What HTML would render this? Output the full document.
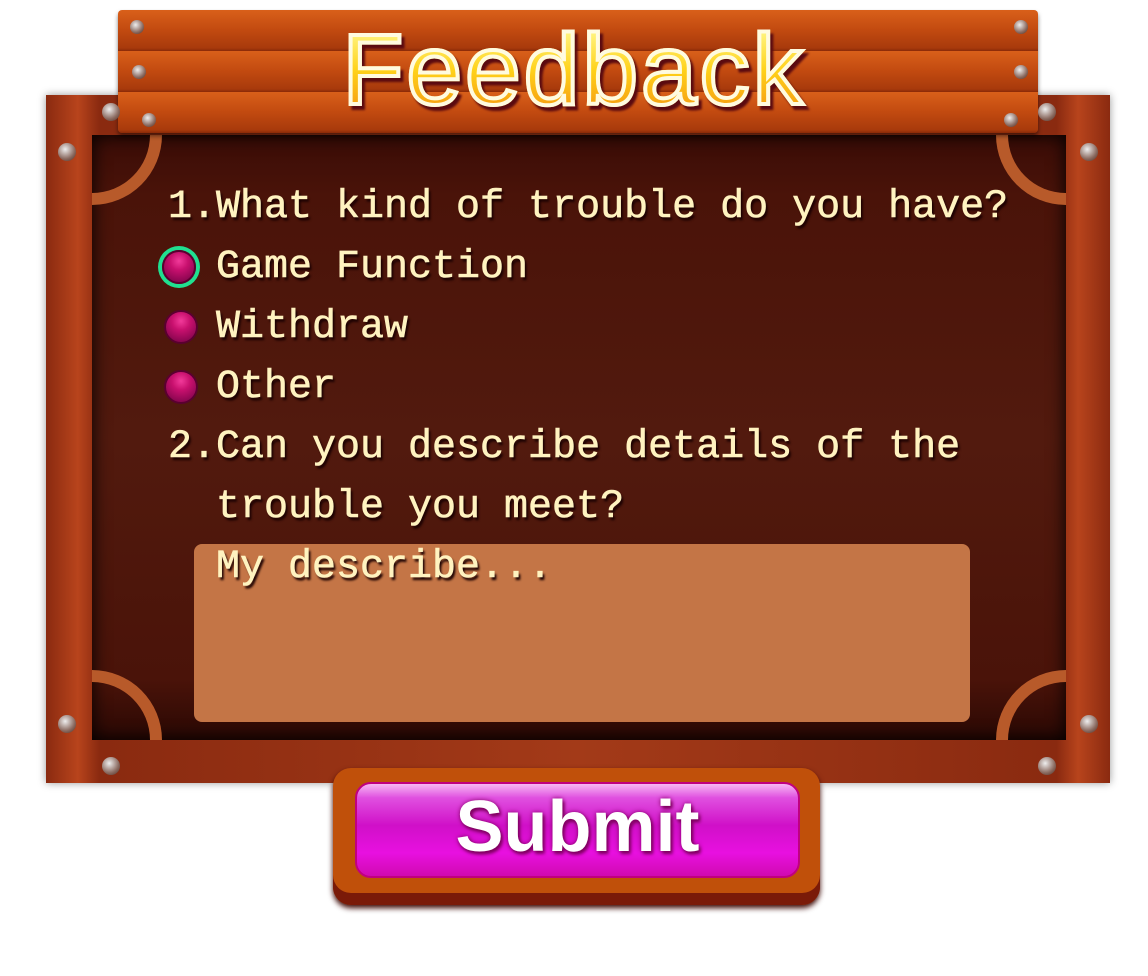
<!DOCTYPE html>
<html><head><style>
body{margin:0;width:1148px;height:976px;background:#fff;position:relative;overflow:hidden;font-family:"Liberation Mono",monospace}
.abs{position:absolute}
.frame{left:46px;top:95px;width:1064px;height:688px;background:linear-gradient(90deg,#8a2a10,#b8441c 3%,#8a2a10 5%,#a33a18 50%,#8a2a10 95%,#b8441c 97%,#8a2a10);box-shadow:0 0 8px rgba(0,0,0,.4)}
.inner{left:92px;top:135px;width:974px;height:605px;background:linear-gradient(180deg,#3a0c06,#4a1309 10%,#521a0e 50%,#4a1309 90%,#2a0804);box-shadow:inset 0 0 18px #000}
.board{left:118px;top:10px;width:920px;height:123px;background:repeating-linear-gradient(180deg,#d9601a 0,#c24a10 20px,#a83a0c 38px,#8a2a08 41px);border-radius:4px;box-shadow:0 3px 4px rgba(0,0,0,.5)}
.title{left:0;width:1148px;top:10px;text-align:center;font-family:"Liberation Sans",sans-serif;font-size:100px;letter-spacing:3px;color:#ffd21a;background:linear-gradient(180deg,#fff27a 20%,#ffd21a 50%,#f59a10 85%);-webkit-background-clip:text;background-clip:text;-webkit-text-fill-color:transparent;-webkit-text-stroke:4px #fffbe0;paint-order:stroke fill;filter:drop-shadow(3px 4px 1px #5a0a10);line-height:120px}
.t{color:#fff3c0;font-size:40px;line-height:60px;text-shadow:2px 3px 2px #1a0002;white-space:pre;-webkit-text-stroke:.6px #fff3c0}
.dot{width:34px;height:34px;border-radius:50%;background:radial-gradient(circle at 50% 30%,#f23a9a 0,#c8106e 35%,#8a0650 80%);border:2px solid #5a0030;box-sizing:border-box}
.nail{width:14px;height:14px;border-radius:50%;background:radial-gradient(circle at 40% 35%,#eee,#8a6a60 60%,#4a2a20)}
.ta{left:194px;top:544px;width:776px;height:178px;background:#c47546;border-radius:8px}
.btno{left:333px;top:768px;width:487px;height:137px;background:#c0500a;border-radius:18px;box-shadow:inset 0 -12px 0 #7a1a08,0 3px 6px #3a0500}
.btni{left:355px;top:782px;width:445px;height:96px;border-radius:16px;background:linear-gradient(180deg,#f7b8f4 0,#e050e0 15%,#d010c8 45%,#e810e0 75%,#d00ab0 100%);border:2px solid #c00080;box-sizing:border-box}
.sub{left:355px;width:445px;top:782px;text-align:center;font-family:"Liberation Sans",sans-serif;font-weight:bold;font-size:72px;letter-spacing:0px;line-height:90px;color:#fff;text-shadow:0 0 5px #800060,2px 3px 3px #800060}
.corner{width:70px;height:70px;border:12px solid #b85a2a;box-sizing:border-box}
</style></head><body>
<div class="abs frame"></div>
<div class="abs inner"></div>
<div class="abs corner" style="left:92px;top:135px;border-top:none;border-left:none;border-bottom-right-radius:70px"></div>
<div class="abs corner" style="left:996px;top:135px;border-top:none;border-right:none;border-bottom-left-radius:70px"></div>
<div class="abs corner" style="left:92px;top:670px;border-bottom:none;border-left:none;border-top-right-radius:70px"></div>
<div class="abs corner" style="left:996px;top:670px;border-bottom:none;border-right:none;border-top-left-radius:70px"></div>
<div class="abs board"></div>
<div class="abs nail" style="left:130px;top:20px"></div>
<div class="abs nail" style="left:132px;top:65px"></div>
<div class="abs nail" style="left:142px;top:113px"></div>
<div class="abs nail" style="left:1014px;top:20px"></div>
<div class="abs nail" style="left:1014px;top:65px"></div>
<div class="abs nail" style="left:1004px;top:113px"></div>
<div class="abs nail" style="left:102px;top:103px;width:18px;height:18px"></div>
<div class="abs nail" style="left:58px;top:143px;width:18px;height:18px"></div>
<div class="abs nail" style="left:1038px;top:103px;width:18px;height:18px"></div>
<div class="abs nail" style="left:1080px;top:143px;width:18px;height:18px"></div>
<div class="abs nail" style="left:58px;top:715px;width:18px;height:18px"></div>
<div class="abs nail" style="left:102px;top:757px;width:18px;height:18px"></div>
<div class="abs nail" style="left:1080px;top:715px;width:18px;height:18px"></div>
<div class="abs nail" style="left:1038px;top:757px;width:18px;height:18px"></div>
<div class="abs title">Feedback</div>
<div class="abs t" style="left:168px;top:178px">1.What kind of trouble do you have?</div>
<div class="abs dot" style="left:162px;top:250px;box-shadow:0 0 0 4px #20e090"></div>
<div class="abs t" style="left:216px;top:238px">Game Function</div>
<div class="abs dot" style="left:164px;top:310px"></div>
<div class="abs t" style="left:216px;top:298px">Withdraw</div>
<div class="abs dot" style="left:164px;top:370px"></div>
<div class="abs t" style="left:216px;top:358px">Other</div>
<div class="abs t" style="left:168px;top:418px">2.Can you describe details of the</div>
<div class="abs t" style="left:216px;top:478px">trouble you meet?</div>
<div class="abs ta"></div>
<div class="abs t" style="left:216px;top:538px">My describe...</div>
<div class="abs btno"></div>
<div class="abs btni"></div>
<div class="abs sub">Submit</div>
</body></html>
